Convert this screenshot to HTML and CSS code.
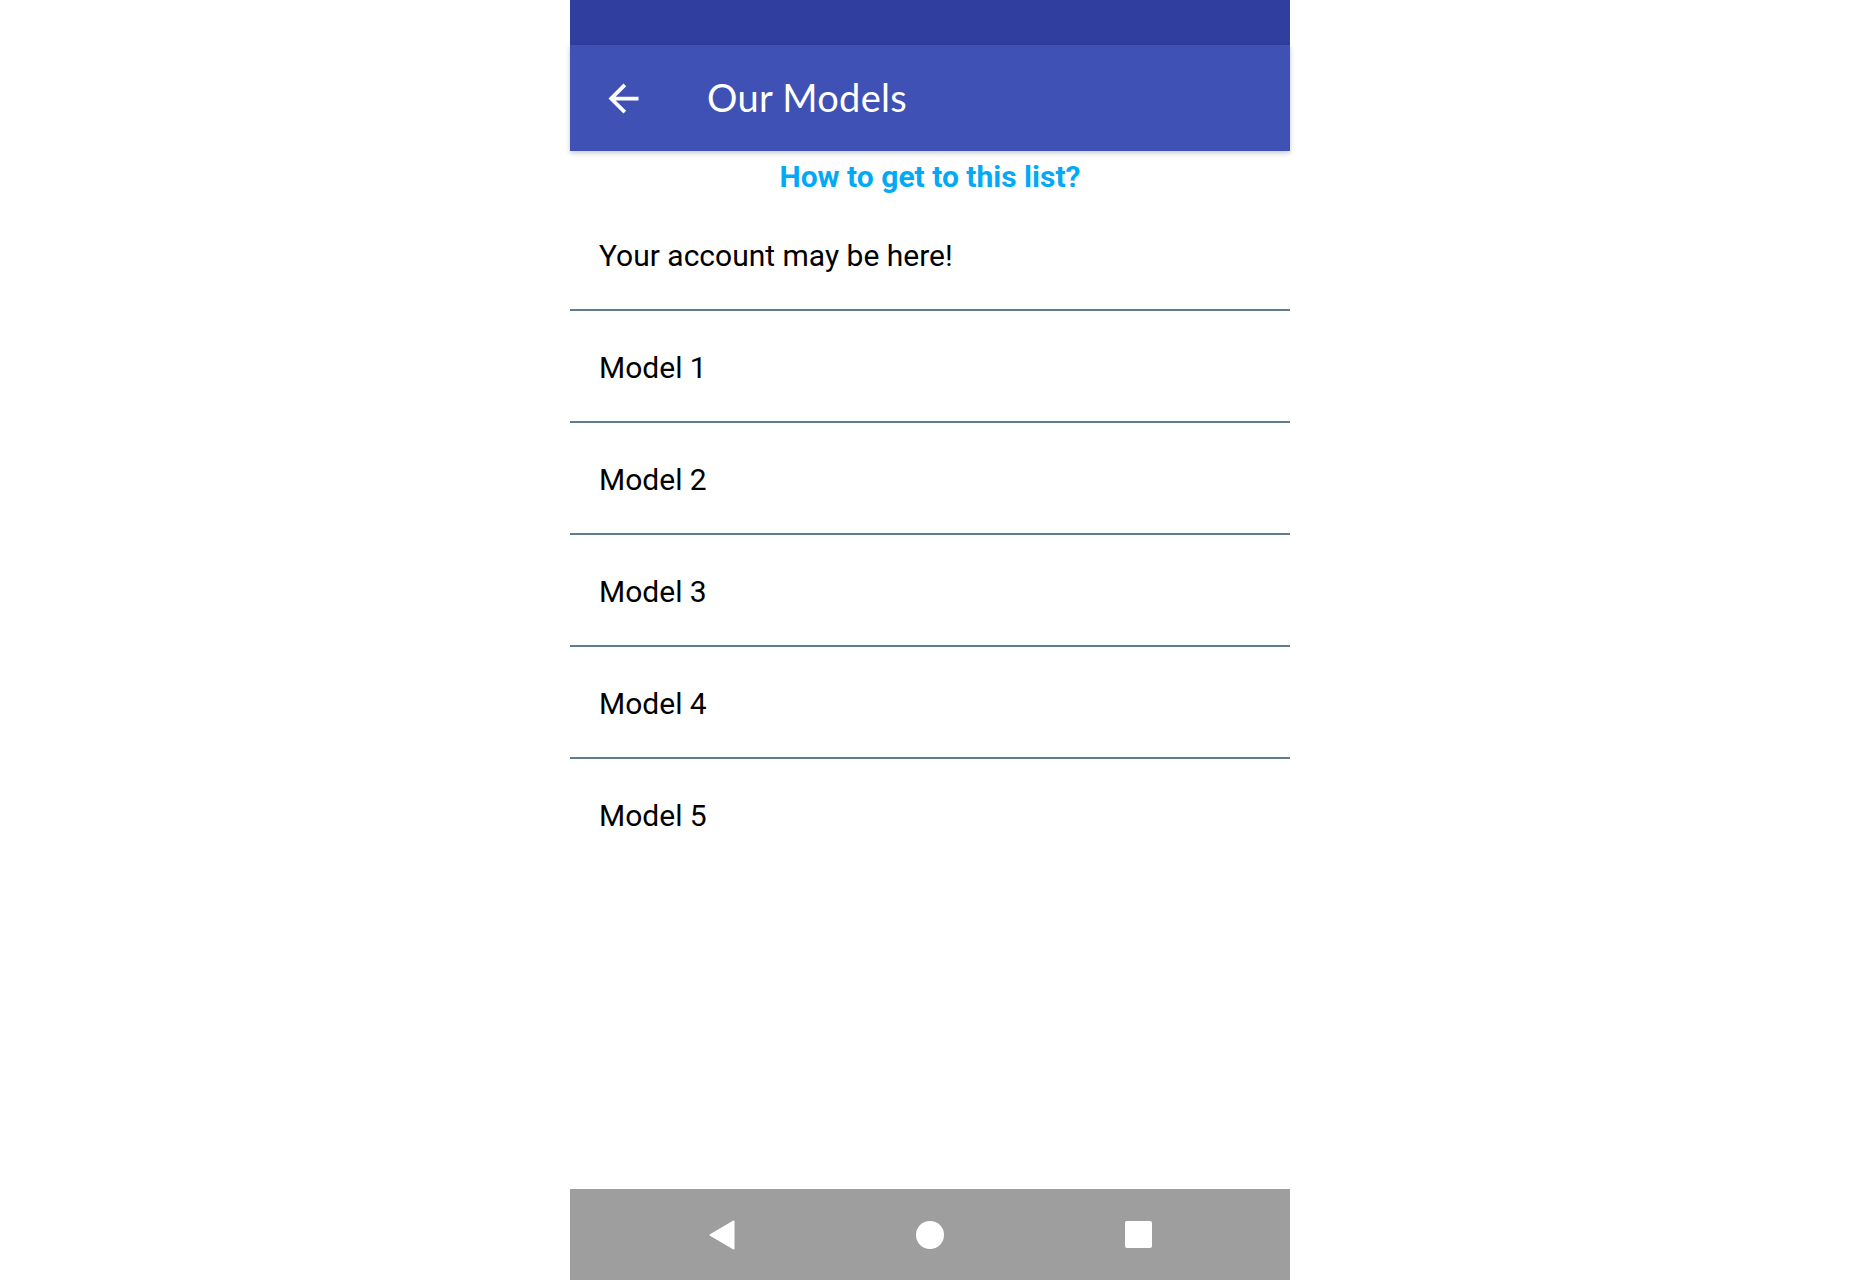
FILE: index.html
```
<!DOCTYPE html>
<html lang="en">
<head>
<meta charset="utf-8">
<title>Our Models</title>
<link rel="stylesheet" href="styles.css">
</head>
<body>
<div class="phone">
  <div class="status-bar"></div>
  <header class="toolbar">
    <svg class="back-icon" viewBox="0 0 24 24" width="45" height="45" aria-hidden="true">
      <path fill="#fff" d="M20 11H7.83l5.59-5.59L12 4l-8 8 8 8 1.41-1.41L7.83 13H20v-2z"/>
    </svg>
    <h1 class="title">Our Models</h1>
  </header>
  <main class="content">
    <div class="help"><a class="help-link" href="#">How to get to this list?</a></div>
    <ul class="list">
      <li class="item">Your account may be here!</li>
      <li class="item">Model 1</li>
      <li class="item">Model 2</li>
      <li class="item">Model 3</li>
      <li class="item">Model 4</li>
      <li class="item">Model 5</li>
    </ul>
  </main>
  <nav class="nav-bar">
    <div class="nav-btn">
      <svg width="30" height="30" viewBox="0 0 30 30" aria-hidden="true">
        <polygon points="26.5,1.5 3.5,15 26.5,28.5" fill="#fff" stroke="#fff" stroke-width="2" stroke-linejoin="round"/>
      </svg>
    </div>
    <div class="nav-btn"><span class="home"></span></div>
    <div class="nav-btn"><span class="recents"></span></div>
  </nav>
</div>
</body>
</html>
```
FILE: styles.css
```
html, body {
  margin: 0;
  padding: 0;
  background: #ffffff;
}

body {
  font-family: Roboto, "Liberation Sans", sans-serif;
}

.phone {
  width: 720px;
  height: 1280px;
  margin: 0 auto;
  display: flex;
  flex-direction: column;
  background: #ffffff;
}

.status-bar {
  height: 45px;
  background: #303f9f;
  flex: none;
}

.toolbar {
  height: 106px;
  flex: none;
  background: #3f51b5;
  display: flex;
  align-items: center;
  box-shadow: 0 2px 5px rgba(0, 0, 0, 0.22);
  position: relative;
  z-index: 1;
}

.back-icon {
  margin-left: 31px;
  flex: none;
}

.title {
  margin: 0 0 0 61px;
  padding-bottom: 2px;
  font-family: Lato, "Open Sans", sans-serif;
  font-weight: 400;
  font-size: 38px;
  color: #ffffff;
  letter-spacing: 0.3px;
}

.content {
  flex: 1;
  display: flex;
  flex-direction: column;
}

.help {
  box-sizing: border-box;
  height: 48px;
  padding-top: 3px;
  display: flex;
  align-items: center;
  justify-content: center;
}

.help-link {
  font-family: Roboto, sans-serif;
  font-weight: 700;
  font-size: 30px;
  color: #03a9f4;
  text-decoration: none;
}

.list {
  list-style: none;
  margin: 0;
  padding: 0;
}

.item {
  box-sizing: border-box;
  height: 112px;
  display: flex;
  align-items: center;
  padding-left: 29px;
  padding-top: 3px;
  font-size: 30px;
  color: #000000;
  border-bottom: 2px solid #607d8b;
}

.item:last-child {
  height: 110px;
  border-bottom: none;
}

.nav-bar {
  height: 91px;
  flex: none;
  background: #9e9e9e;
  display: flex;
  align-items: center;
  justify-content: center;
  gap: 160px;
}

.nav-btn {
  width: 48px;
  height: 48px;
  display: flex;
  align-items: center;
  justify-content: center;
}

.home {
  width: 28px;
  height: 28px;
  border-radius: 50%;
  background: #ffffff;
}

.recents {
  width: 27px;
  height: 27px;
  border-radius: 2px;
  background: #ffffff;
}
```
